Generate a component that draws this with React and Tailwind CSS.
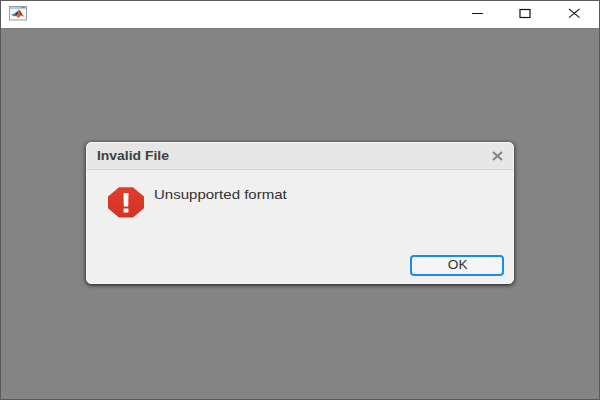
function MatlabIcon() {
  return (
    <svg width="18" height="15" viewBox="0 0 18 15" className="mb-[2px]">
      <rect x="0.5" y="0.5" width="17" height="13.5" fill="#f7f9fa" stroke="#8ba0b1" />
      <rect x="1" y="1" width="16" height="2" fill="#b5c9d8" />
      <rect x="12" y="1" width="4" height="1" fill="#6e8da6" />
      <path d="M2 8.8 L6 7.3 L9 4.5 L8 9.2 L5.5 10.6 Z" fill="#3f86b4" />
      <path d="M6 7.3 L8 6.5 L10 3.5 L8.6 9.5 L7 10 Z" fill="#263c55" />
      <path d="M10 3.3 L12 6.5 L15.5 11 L12.5 9.5 L9 12 L7 9.7 L8.8 7.5 Z" fill="#e0652a" />
      <path d="M10.2 3.5 L12.4 7 L13.4 9.5 L11.2 8.6 Z" fill="#8f2d20" />
    </svg>
  );
}

function TitleBar() {
  return (
    <header className="flex h-[27px] shrink-0 items-center justify-between bg-white pl-2">
      <MatlabIcon />
      <div className="flex items-center pb-[3px]">
        <button className="flex h-6 w-12 items-center justify-center" aria-label="Minimize">
          <svg width="12" height="12" viewBox="0 0 12 12">
            <path d="M1 6.5H12" stroke="#111" strokeWidth="1" />
          </svg>
        </button>
        <button className="flex h-6 w-12 items-center justify-center" aria-label="Maximize">
          <svg width="12" height="12" viewBox="0 0 12 12">
            <rect x="1" y="2.5" width="10" height="8" fill="none" stroke="#111" strokeWidth="1.2" />
          </svg>
        </button>
        <button className="flex h-6 w-[50px] items-center justify-center" aria-label="Close">
          <svg width="12" height="12" viewBox="0 0 12 12">
            <path d="M1 2L11.5 10.7M11.5 2L1 10.7" stroke="#222" strokeWidth="1.1" />
          </svg>
        </button>
      </div>
    </header>
  );
}

function ErrorIcon() {
  return (
    <svg width="38" height="32" viewBox="0 0 38 32" className="shrink-0">
      <defs>
        <linearGradient id="stop" x1="0" y1="0" x2="0" y2="1">
          <stop offset="0" stopColor="#e03d2d" />
          <stop offset="1" stopColor="#d03325" />
        </linearGradient>
      </defs>
      <path d="M12 1.3H26L37 10.5V22.2L26 31.5H12L1 22.2V10.5Z" fill="url(#stop)" />
      <path d="M16.5 7H21.5L21.2 20.5H16.8Z" fill="#fff" />
      <rect x="16.6" y="22.5" width="4.8" height="4" fill="#fff" />
    </svg>
  );
}

function Dialog() {
  return (
    <section className="flex h-[142px] w-[428px] flex-col overflow-hidden rounded-[5px] border border-[#f7f7f7] bg-[#f0f0f0] shadow-[0_1px_4px_0px_rgba(0,0,0,0.85)]">
      <div className="flex h-[27px] shrink-0 items-center justify-between border-b border-[#d2d2d2] bg-[#e6e6e6] pr-[10px] pl-[10px]">
        <h1 className="origin-left scale-x-[1.16] pb-px text-[12px] leading-[14px] font-bold whitespace-nowrap text-[#404040]">
          Invalid File
        </h1>
        <svg width="11" height="10" viewBox="0 0 11 10">
          <path d="M1 1L10 9M10 1L1 9" stroke="#858585" strokeWidth="2.1" />
        </svg>
      </div>
      <div className="flex grow items-start pt-4 pl-5">
        <ErrorIcon />
        <p className="mt-px ml-[9px] origin-left scale-x-[1.155] text-[13px] leading-[16px] whitespace-nowrap text-[#303030]">
          Unsupported format
        </p>
      </div>
      <div className="flex shrink-0 justify-end pr-[9px] pb-[7px]">
        <button className="flex h-[21px] w-[94px] items-center justify-center rounded-[4px] border-2 border-[#168cee] bg-[#f5f5f5]">
          <span className="scale-x-[1.14] pb-[2px] pl-px text-[12px] leading-[14px] text-[#303030]">OK</span>
        </button>
      </div>
    </section>
  );
}

export default function App() {
  return (
    <div className="h-[400px] w-[600px] overflow-hidden bg-[#5a5a5a] p-px font-['Liberation_Sans',Arial,sans-serif]">
      <div className="flex h-full flex-col">
        <TitleBar />
        <main className="flex grow items-start border-t border-[#7c7c7c] bg-[#848484] pt-[113px] pl-[85px]">
          <Dialog />
        </main>
      </div>
    </div>
  );
}
